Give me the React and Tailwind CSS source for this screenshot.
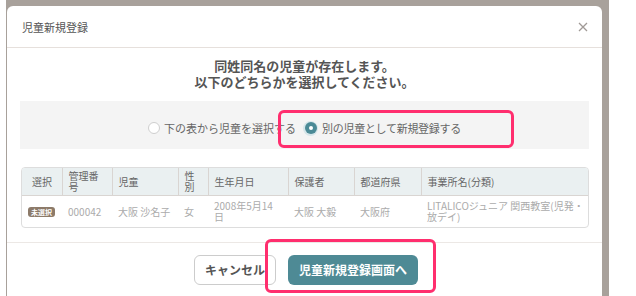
const font = { fontFamily: '"Noto Sans CJK JP", "Noto Sans", sans-serif' };

const columns = [
  { label: "選択", w: "w-[40px]" },
  { label: "管理番号", w: "w-[50px]" },
  { label: "児童", w: "w-[66px]" },
  { label: "性別", w: "w-[30px]" },
  { label: "生年月日", w: "w-[80px]" },
  { label: "保護者", w: "w-[66px]" },
  { label: "都道府県", w: "w-[67px]" },
  { label: "事業所名(分類)", w: "" },
];

const row = ["000042", "大阪 沙名子", "女", "2008年5月14日", "大阪 大毅", "大阪府"];

export default function App() {
  return (
    <div className="w-[636px] h-[296px] bg-white flex overflow-hidden" style={font}>
      <div className="w-[6px] shrink-0 bg-white" />
      <div className="w-[603px] shrink-0 bg-[#a8a19b] pt-[6px] pl-[1px] pr-[7px] flex">
        <div className="relative flex-1 bg-white rounded-t-[6px] flex flex-col">
          {/* header */}
          <div className="h-[42px] border-b border-[#e6e0dc] flex items-center justify-between pl-[15px] pr-[14px]">
            <span className="text-[11px] text-[#555] pt-[1px]">児童新規登録</span>
            <svg width="10" height="10" viewBox="0 0 10 10" className="mt-[1px]">
              <path d="M1 1 L9 9 M9 1 L1 9" stroke="#a09a96" strokeWidth="1.3" />
            </svg>
          </div>

          {/* body */}
          <div className="px-[13px] border-b border-[#ece8e5] pb-[14px]">
            <div className="mt-[10px] text-center text-[13px] leading-[16px] font-bold text-[#555]">
              <div>同姓同名の児童が存在します。</div>
              <div>以下のどちらかを選択してください。</div>
            </div>

            <div className="mt-[11px] h-[48px] bg-[#f4f4f4] flex items-center justify-center gap-[7px] text-[11px] text-[#666] pt-[6px]">
              <label className="flex items-center gap-[4px]">
                <span className="w-[12px] h-[12px] rounded-full border border-[#cfcfcf] bg-white" />
                <span>下の表から児童を選択する</span>
              </label>
              <label className="flex items-center gap-[4px]">
                <span className="w-[15px] h-[15px] rounded-full bg-[#d6e6ea] flex items-center justify-center">
                  <span className="w-[12px] h-[12px] rounded-full bg-[#4b8a96] flex items-center justify-center">
                    <span className="w-[4px] h-[4px] rounded-full bg-white" />
                  </span>
                </span>
                <span className="tracking-[-0.3px]">別の児童として新規登録する</span>
              </label>
            </div>

            <div className="mt-[18px] ml-[1px] border border-[#ddd] rounded-[4px] overflow-hidden">
              <table className="w-full table-fixed border-collapse text-[10px] leading-[11px]">
                <thead className="bg-[#eaf0f1] text-[#666]">
                  <tr className="h-[27px]">
                    {columns.map((c, i) => (
                      <th
                        key={c.label}
                        className={`${c.w} text-left font-normal px-[6px] align-middle border-b border-[#d9d5d2] ${
                          i < columns.length - 1 ? "border-r border-r-[#d9d5d2]" : ""
                        } ${i === 0 ? "pl-[10px]" : ""}`}
                      >
                        {c.label}
                      </th>
                    ))}
                  </tr>
                </thead>
                <tbody className="text-[#ababab]">
                  <tr className="h-[32px]">
                    <td className="pl-[6px] align-middle">
                      <span className="inline-block px-[3px] rounded-[3px] bg-[#8c7a69] text-white text-[7px] leading-[10px] font-bold">未選択</span>
                    </td>
                    {row.map((v, i) => (
                      <td key={i} className="px-[6px] align-middle">
                        {v}
                      </td>
                    ))}
                    <td className="pl-[6px] pr-0 align-middle whitespace-nowrap">
                      LITALICOジュニア 関西教室(児発・
                      <br />
                      放デイ)
                    </td>
                  </tr>
                </tbody>
              </table>
            </div>
          </div>

          {/* footer */}
          <div className="flex justify-center gap-[12px] pt-[12px] pl-[3px]">
            <button className="w-[82px] h-[30px] rounded-[6px] border border-[#ccc] bg-white text-[12px] font-bold text-[#555]">
              キャンセル
            </button>
            <button className="w-[130px] h-[30px] rounded-[6px] bg-[#4e8a95] text-[12px] font-bold text-white">
              児童新規登録画面へ
            </button>
          </div>

          {/* annotation highlights */}
          <div className="absolute left-[271px] top-[104px] w-[236px] h-[38px] border-[3px] border-[#ff2e6e] rounded-[6px]" />
          <div className="absolute left-[258px] top-[233px] w-[171px] h-[54px] border-[3px] border-[#ff2e6e] rounded-[6px]" />
        </div>
      </div>
    </div>
  );
}
